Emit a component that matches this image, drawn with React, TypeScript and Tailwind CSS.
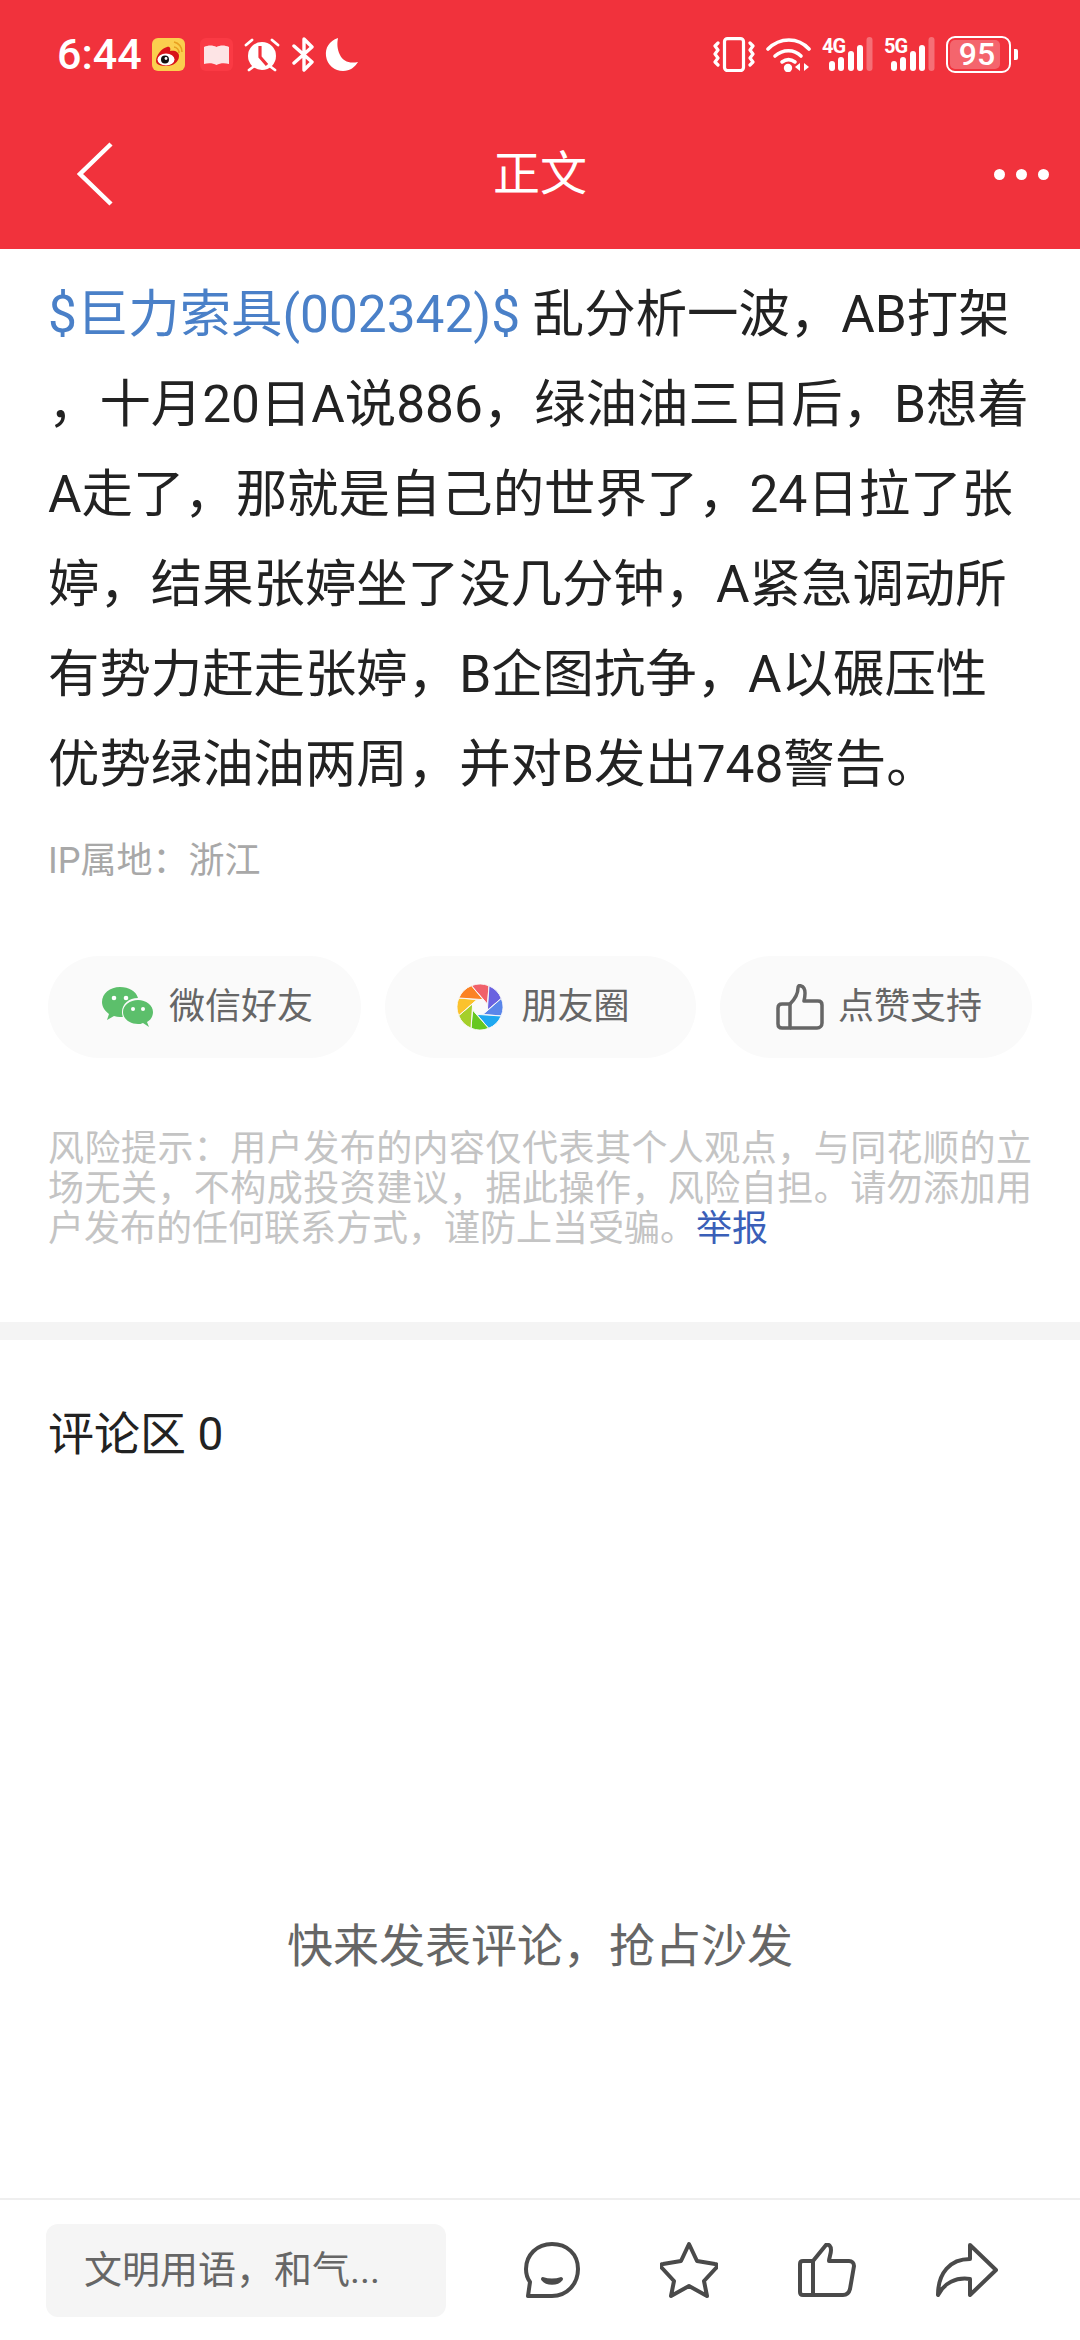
import React from "react";

const FONT = '"Roboto","Noto Sans CJK SC",sans-serif';

function Weibo() {
  return (
    <svg width="33" height="33" viewBox="0 0 33 33">
      <rect width="33" height="33" rx="6" fill="#fbcf4e" />
      <path d="M4 23c0-6 6-13 11-14 3-1 4 2 3 4 5-1 9 1 9 5 0 6-6 10-12 10S4 27 4 23z" fill="#d8141a" />
      <ellipse cx="14" cy="21.500" rx="8.500" ry="6" fill="#fff" />
      <circle cx="13" cy="21.500" r="4" fill="#111" />
      <circle cx="14" cy="20.500" r="1.400" fill="#fff" />
      <path d="M22 9a6 6 0 0 1 5 6M22 4a10 10 0 0 1 8 10" stroke="#e8a020" strokeWidth="1.600" fill="none" />
    </svg>
  );
}

function RedBook() {
  return (
    <svg width="33" height="33" viewBox="0 0 33 33">
      <rect width="33" height="33" rx="6" fill="#fa3a44" />
      <path d="M4 9c4-2 9-2 12.500 0C20 7 25 7 29 9v17c-4-1-9-1-12.500 1C13 25 8 25 4 26z" fill="#fde4e5" />
    </svg>
  );
}

function Alarm() {
  return (
    <svg width="36" height="35" viewBox="0 0 36 35">
      <circle cx="18" cy="19" r="14" fill="#fff" />
      <path d="M16 9v11l7 8" stroke="#f1323c" strokeWidth="3.200" fill="none" />
      <path d="M2 8l6-5M34 8l-6-5M5 33l4-3M31 33l-4-3" stroke="#fff" strokeWidth="2.800" strokeLinecap="round" />
    </svg>
  );
}

function Bluetooth() {
  return (
    <svg width="23" height="35" viewBox="0 0 23 35" fill="none">
      <path d="M2 9l18 16-8 8V2l8 8L2 26" stroke="#fff" strokeWidth="3.400" strokeLinejoin="round" strokeLinecap="round" />
    </svg>
  );
}

function Moon() {
  return (
    <svg width="33" height="35" viewBox="0 0 33 35">
      <path d="M13 1C4 4 0 11 1 19c1 9 9 15 17 15 7 0 12-4 15-9-9 2-15-1-18-7-3-6-3-12-2-17z" fill="#fff" />
    </svg>
  );
}

function Vibrate() {
  return (
    <svg width="42" height="35" viewBox="0 0 42 35" fill="none" stroke="#fff" strokeWidth="3.200" strokeLinecap="round" strokeLinejoin="round">
      <rect x="11.500" y="1.600" width="19" height="32" rx="3" />
      <path d="M5 6L2 9l3 4-3 4 3 4-3 4 3 3" />
      <path d="M37 6l3 3-3 4 3 4-3 4 3 4-3 3" />
    </svg>
  );
}

function Wifi() {
  return (
    <svg width="45" height="35" viewBox="0 0 45 35" fill="none">
      <path d="M2 12c12-12 30-12 41 0" stroke="#fff" strokeWidth="3.600" strokeLinecap="round" />
      <path d="M9 19c8-7 19-7 26 0" stroke="#fff" strokeWidth="3.600" strokeLinecap="round" />
      <path d="M16 25c4-3 9-3 13 0" stroke="#fff" strokeWidth="3.600" strokeLinecap="round" />
      <circle cx="22" cy="31" r="4.200" fill="#fff" />
      <path d="M34 26v8l-5-4zM38 26v8l5-4z" fill="#fff" />
    </svg>
  );
}

function Signal({ label }: { label: string }) {
  const bars = [[7, 10], [16, 14], [26, 20], [35, 26]];
  return (
    <div className="relative h-[36px] w-[51px]">
      <span className="absolute left-0 top-[-1px] text-[20px] leading-[22px] font-bold tracking-[-1px] text-white" style={{ fontFamily: '"Roboto",sans-serif' }}>
        {label}
      </span>
      <svg width="51" height="36" viewBox="0 0 51 36" className="absolute left-0 top-0">
        {bars.map(([x, h]) => (
          <rect key={x} x={x} y={35 - h} width="6" height={h} rx="3" fill="#fff" />
        ))}
        <rect x="44.500" y="1" width="6" height="34" rx="3" fill="#fff" fillOpacity="0.3" />
      </svg>
    </div>
  );
}

function Battery() {
  return (
    <div className="flex items-center gap-[3px]">
      <div className="relative flex h-[37px] w-[65px] items-center overflow-hidden rounded-[9px] border-[2px] border-white p-[2px]">
        <div className="h-full w-[50px] rounded-[5px] bg-white/25" />
        <span className="absolute inset-0 flex items-center justify-center pr-[3px] text-[32px] leading-none font-medium text-white" style={{ fontFamily: '"Roboto",sans-serif' }}>
          95
        </span>
      </div>
      <div className="h-[11px] w-[4px] rounded-r-[2px] bg-white" />
    </div>
  );
}

function Wechat() {
  return (
    <svg width="51" height="41" viewBox="0 0 51 41">
      <path d="M18 0C8 0 0 6.500 0 15c0 5 3 9 7 12l-2 6 7-4c2 .5 4 1 6 1 1 0 2 0 3-.2C20 28 20 26 20 25c0-8 7-14 16-14C34 4 27 0 18 0z" fill="#5cbf6b" />
      <path d="M36 13c-8 0-15 5-15 12s7 12 15 12c2 0 3 0 5-1l6 4-2-5c4-2 6-6 6-10 0-7-7-12-15-12z" fill="#5cbf6b" />
      <circle cx="12" cy="11" r="2.300" fill="#fff" />
      <circle cx="24" cy="11" r="2.300" fill="#fff" />
      <circle cx="31" cy="22" r="2" fill="#fff" />
      <circle cx="41" cy="22" r="2" fill="#fff" />
    </svg>
  );
}

function Moments() {
  const colors = ["#f0616b", "#6a62e0", "#5a86ea", "#1fa8f0", "#66c820", "#a5cf2a", "#fbc22d", "#fb8224"];
  const pt = (r: number, deg: number) => {
    const a = ((deg - 90) * Math.PI) / 180;
    return `${(r * Math.cos(a)).toFixed(2)} ${(r * Math.sin(a)).toFixed(2)}`;
  };
  return (
    <svg width="46" height="46" viewBox="-23 -23 46 46">
      {colors.map((c, i) => {
        const t = i * 45 - 22;
        return (
          <path
            key={c}
            d={`M${pt(23, t)}A23 23 0 0 1 ${pt(23, t + 45)}L${pt(8, t + 90)}Z`}
            fill={c}
            stroke="#fafafa"
            strokeWidth="1"
            strokeLinejoin="round"
          />
        );
      })}
    </svg>
  );
}

function ThumbShare() {
  return (
    <svg width="48" height="46" viewBox="0 0 48 46" fill="none" stroke="#666" strokeWidth="3.500" strokeLinejoin="round">
      <path d="M14 44H6c-2 0-4-1-4-4V24c0-2 1-4 4-4h8z" />
      <path d="M14 20c4-4 8-10 8-16 0-2 1-3 3-2 4 1 5 6 3 15h14c3 0 4 2 4 4v18c0 3-2 5-5 5H14" />
    </svg>
  );
}

function ShareButton({ children, w }: { children: React.ReactNode; w: string }) {
  return <div className={`flex h-[102px] items-center justify-center rounded-[51px] bg-[#fafafa] pl-[6px] ${w}`}>{children}</div>;
}

function CommentIcon() {
  return (
    <svg width="56" height="56" viewBox="0 0 56 56" fill="none" stroke="#4a4a4a" strokeWidth="4" strokeLinejoin="round" strokeLinecap="round">
      <path d="M28 2C13 2 2 13 2 27c0 5 1 9 4 13l-2 14h24c15 0 26-12 26-27S43 2 28 2z" />
      <path d="M19 37c4 5 14 5 18 0-5 2-13 2-18 0z" fill="#4a4a4a" />
    </svg>
  );
}

function StarIcon() {
  return (
    <svg width="58" height="58" viewBox="0 0 58 58" fill="none" stroke="#4a4a4a" strokeWidth="4" strokeLinejoin="round">
      <path d="M29 3l8 17 18 3c2 0 3 2 1 4L44 40l3 15-18-10-18 10 3-15L2 27c-2-2-1-4 1-4l18-3z" />
    </svg>
  );
}

function LikeIcon() {
  return (
    <svg width="58" height="55" viewBox="0 0 58 55" fill="none" stroke="#4a4a4a" strokeWidth="4" strokeLinejoin="round">
      <path d="M15 18H5c-2 0-3 1-3 3v28c0 2 1 3 3 3h10z" />
      <path d="M15 18L28 2c3-1 5 1 5 5 0 4-2 8-2 11h20c3 0 5 2 5 5l-4 23c-1 4-3 6-7 6H15" />
    </svg>
  );
}

function ShareIcon() {
  return (
    <svg width="62" height="54" viewBox="0 0 62 54" fill="none" stroke="#4a4a4a" strokeWidth="4" strokeLinejoin="round">
      <path d="M34 2l26 25-26 25V36C20 34 8 40 2 52 2 30 14 16 34 16z" />
    </svg>
  );
}

export default function App() {
  return (
    <div className="flex h-[2340px] w-[1080px] flex-col bg-white" style={{ fontFamily: FONT }}>
      <header className="h-[249px] shrink-0 bg-[#f1323c] pt-[36px] text-white">
        <div className="flex h-[36px] items-center justify-between pl-[57px] pr-[62px]">
          <div className="flex items-center">
            <span className="mr-[10px] text-[43px] leading-[36px] font-medium text-white">6:44</span>
            <Weibo />
            <span className="ml-[15px]"><RedBook /></span>
            <span className="ml-[11px]"><Alarm /></span>
            <span className="ml-[12px]"><Bluetooth /></span>
            <span className="ml-[10px]"><Moon /></span>
          </div>
          <div className="flex items-center gap-[11px]">
            <Vibrate />
            <Wifi />
            <Signal label="4G" />
            <Signal label="5G" />
            <Battery />
          </div>
        </div>
        <div className="mt-[70px] grid grid-cols-[1fr_auto_1fr] items-center px-[31px]">
          <svg width="36" height="64" viewBox="0 0 36 64" fill="none" className="ml-[46px]">
            <path d="M34 2L3 32l31 30" stroke="#fff" strokeWidth="4.500" />
          </svg>
          <span className="text-[47px] leading-[64px] text-white">正文</span>
          <div className="flex justify-end gap-[11px]">
            <span className="h-[11px] w-[11px] rounded-full bg-white" />
            <span className="h-[11px] w-[11px] rounded-full bg-white" />
            <span className="h-[11px] w-[11px] rounded-full bg-white" />
          </div>
        </div>
      </header>

      <article className="px-[48px] pt-[21px]">
        <p className="text-[51.4px] leading-[90px] text-[#222222] [line-break:anywhere]">
          <span className="text-[#4a80c8]">$巨力索具(002342)$</span> 乱分析一波，AB打架，十月20日A说886，绿油油三日后，B想着A走了，那就是自己的世界了，24日拉了张婷，结果张婷坐了没几分钟，A紧急调动所有势力赶走张婷，B企图抗争，A以碾压性优势绿油油两周，并对B发出748警告。
        </p>
        <div className="mt-[24px] text-[36px] leading-[54px] text-[#a8a8a8]">IP属地：浙江</div>
      </article>

      <div className="mt-[68px] flex justify-between px-[48px]">
        <ShareButton w="w-[313px]">
          <Wechat />
          <span className="ml-[16px] text-[36px] text-[#666666]">微信好友</span>
        </ShareButton>
        <ShareButton w="w-[311px]">
          <Moments />
          <span className="ml-[18px] text-[36px] text-[#666666]">朋友圈</span>
        </ShareButton>
        <ShareButton w="w-[312px]">
          <ThumbShare />
          <span className="ml-[14px] text-[36px] text-[#666666]">点赞支持</span>
        </ShareButton>
      </div>

      <p className="mt-[71px] px-[48px] text-justify text-[36px] leading-[40px] text-[#c4c4c4]">
        风险提示：用户发布的内容仅代表其个人观点，与同花顺的立场无关，不构成投资建议，据此操作，风险自担。请勿添加用户发布的任何联系方式，谨防上当受骗。<span className="text-[#3a5fb8]">举报</span>
      </p>

      <div className="mt-[73px] h-[18px] shrink-0 bg-[#f4f4f4]" />

      <h2 className="mt-[64px] px-[48px] text-[46px] leading-[60px] text-[#222222]">评论区 0</h2>

      <div className="flex flex-1 items-center justify-center pt-[230px]">
        <span className="text-[46px] text-[#666666]">快来发表评论，抢占沙发</span>
      </div>

      <footer className="flex h-[142px] shrink-0 items-center border-t-2 border-[#efefef] pl-[46px]">
        <div className="flex h-[93px] w-[400px] items-center rounded-[12px] bg-[#f5f5f5] pl-[38px] text-[38px] text-[#666666]">
          文明用语，和气...
        </div>
        <div className="ml-[78px] flex items-center gap-[80px]">
          <CommentIcon />
          <StarIcon />
          <LikeIcon />
          <ShareIcon />
        </div>
      </footer>
    </div>
  );
}
